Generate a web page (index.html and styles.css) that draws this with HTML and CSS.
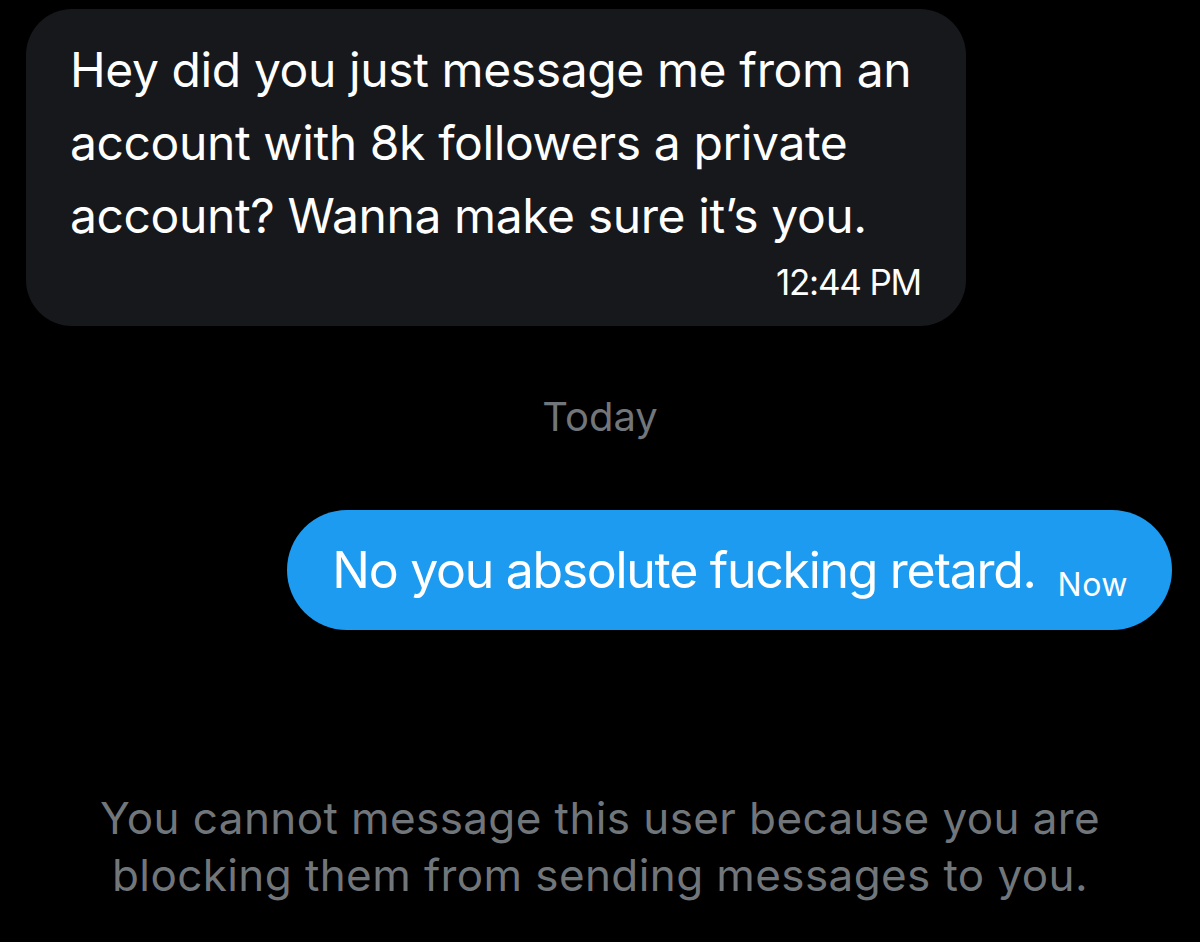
FILE: index.html
```html
<!DOCTYPE html>
<html lang="en">
<head>
<meta charset="utf-8">
<title>Messages</title>
<link rel="stylesheet" href="styles.css">
</head>
<body>
<main class="thread">
  <div class="bubble bubble-in">
    <p class="bubble-text">Hey did you just message me from an account with 8k followers a private account? Wanna make sure it’s you.</p>
    <div class="bubble-time">12:44 PM</div>
  </div>
  <div class="day">Today</div>
  <div class="row-out">
    <div class="bubble bubble-out">
      <span class="out-text">No you absolute fucking retard.</span>
      <span class="out-time">Now</span>
    </div>
  </div>
  <p class="notice">You cannot message this user because you are blocking them from sending messages to you.</p>
</main>
</body>
</html>
```
FILE: styles.css
```css
html, body {
  margin: 0;
  padding: 0;
  background: #000;
}
body {
  width: 1200px;
  height: 942px;
  overflow: hidden;
  font-family: Inter, "Noto Sans", sans-serif;
  color: #e7e9ea;
}
.thread {
  display: flex;
  flex-direction: column;
  padding-top: 9px;
}
.bubble-in {
  margin-left: 26px;
  width: 940px;
  box-sizing: border-box;
  background: #16181c;
  border-radius: 46px;
  padding: 24px 45px 24px 44px;
}
.bubble-text {
  margin: 0;
  font-size: 48px;
  line-height: 73px;
  color: #fff;
  letter-spacing: -0.4px;
}
.bubble-time {
  margin-top: 10px;
  text-align: right;
  font-size: 35px;
  line-height: 40px;
  color: #fff;
  letter-spacing: -1.2px;
}
.day {
  margin-top: 67px;
  text-align: center;
  font-size: 40px;
  line-height: 48px;
  color: #71767b;
}
.row-out {
  display: flex;
  justify-content: flex-end;
  margin-top: 69px;
  padding-right: 28px;
}
.bubble-out {
  height: 120px;
  box-sizing: border-box;
  background: #1d9bf0;
  border-radius: 60px;
  padding: 0 44px 0 45px;
  display: flex;
  align-items: baseline;
  gap: 22px;
  color: #fff;
}
.out-text {
  font-size: 50px;
  line-height: 120px;
  letter-spacing: -1.3px;
}
.out-time {
  font-size: 32px;
  letter-spacing: 0.5px;
  position: relative;
  top: 8px;
}
.notice {
  margin: 160px 0 0;
  padding: 0 95px;
  text-align: center;
  font-size: 44px;
  line-height: 57px;
  color: #71767b;
  letter-spacing: 0.4px;
}
```
